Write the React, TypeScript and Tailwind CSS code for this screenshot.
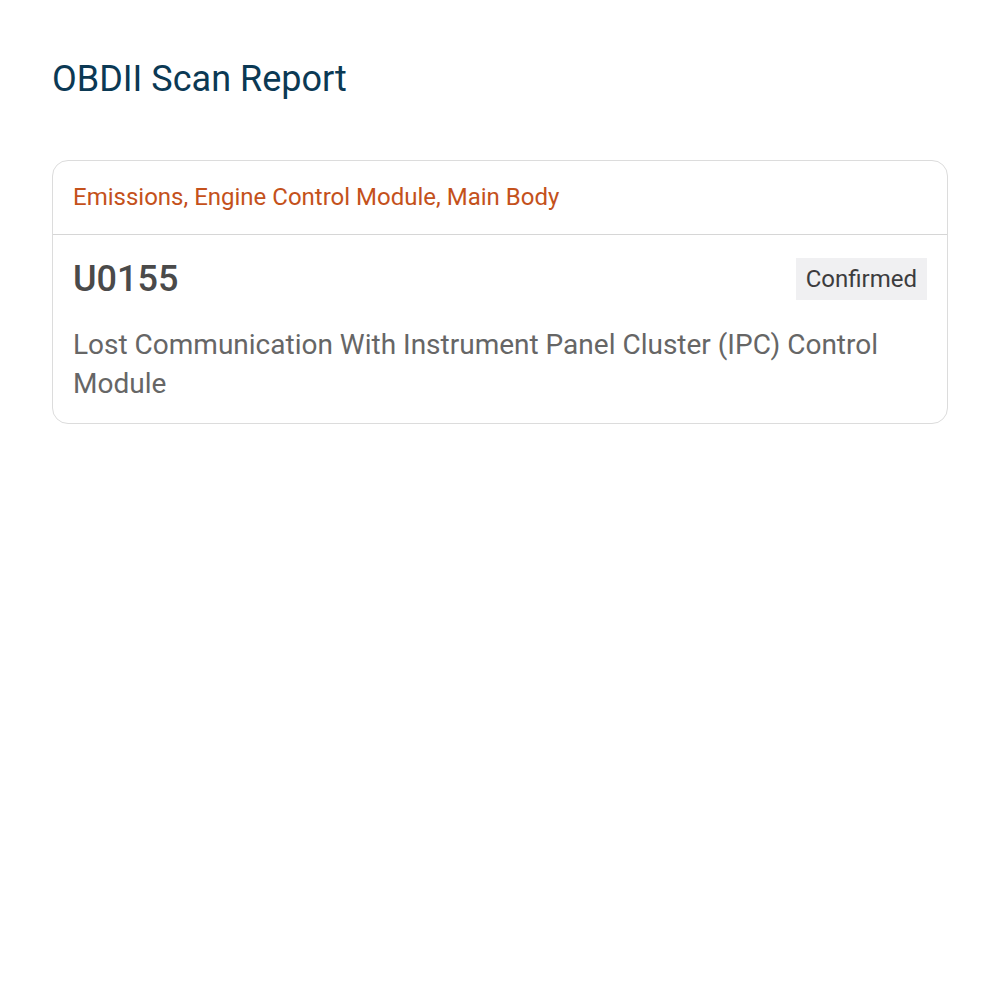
export default function App() {
  return (
    <div
      className="min-h-screen bg-white px-[52px] pt-[52px]"
      style={{ fontFamily: "Roboto, 'Noto Sans', sans-serif" }}
    >
      <h1 className="text-[36px] leading-[54px] text-[#0b3954]">OBDII Scan Report</h1>

      <div className="mt-[54px] rounded-2xl border border-[#dcdcdc]">
        <div className="border-b border-[#d6d6d6] px-5 pt-[18px] pb-[19px] text-[24px] leading-[36px] text-[#c4511b]">
          Emissions, Engine Control Module, Main Body
        </div>
        <div className="px-5 pt-[23px] pb-5">
          <div className="flex items-center justify-between">
            <span className="text-[36px] font-medium leading-[42px] text-[#4a4a4a]">U0155</span>
            <span className="bg-[#f0f0f2] px-[10px] py-[6px] text-[24px] leading-[30px] text-[#3c3c3e]">
              Confirmed
            </span>
          </div>
          <p className="mt-[25px] text-[28px] leading-[39px] text-[#666666]">
            Lost Communication With Instrument Panel Cluster (IPC) Control Module
          </p>
        </div>
      </div>
    </div>
  );
}
